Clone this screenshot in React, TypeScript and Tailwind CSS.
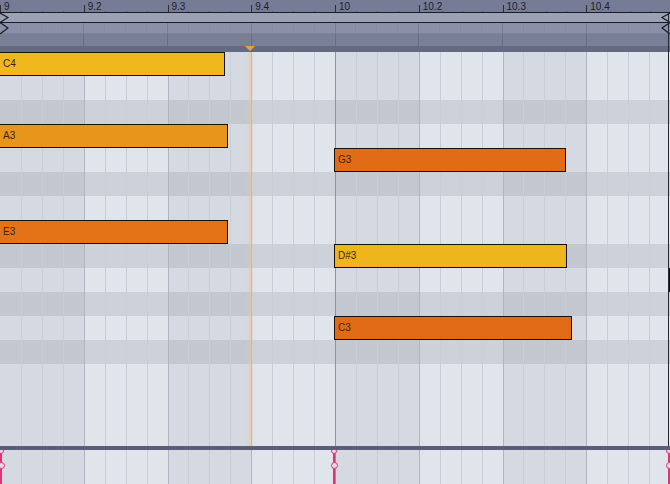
const BEATS = ['9', '9.2', '9.3', '9.4', '10', '10.2', '10.3', '10.4'];

// piano-roll lanes, top to bottom: l = white key, d = black key
const ROWS = ['l', 'l', 'd', 'l', 'l', 'd', 'l', 'l', 'd', 'l', 'd', 'l', 'd', 'l', 'l', 'l', 'l'];

const NOTES = [
  { label: 'C4', pos: 'left-[-1px] top-[0px] w-[226px]', color: 'bg-[#f0b81d]' },
  { label: 'A3', pos: 'left-[-1px] top-[72px] w-[229px]', color: 'bg-[#e8961b]' },
  { label: 'G3', pos: 'left-[334px] top-[96px] w-[232px]', color: 'bg-[#e26c15]' },
  { label: 'E3', pos: 'left-[-1px] top-[168px] w-[229px]', color: 'bg-[#e37316]' },
  { label: 'D#3', pos: 'left-[334px] top-[192px] w-[233px]', color: 'bg-[#efb51c]' },
  { label: 'C3', pos: 'left-[334px] top-[264px] w-[238px]', color: 'bg-[#e16b15]' },
  { label: '', pos: 'left-[669px] top-[216px] w-[10px]', color: 'bg-[#efb51c]' },
];

const SUBS = Array.from({ length: 32 }, (_, i) => i);

function lineClass(i: number) {
  if (i === 0) return 'border-l border-transparent';
  if (i % 16 === 0) return 'border-l border-[#8f939e]';
  if (i % 4 === 0) return 'border-l border-[#b1b5bf]';
  return 'border-l border-[#c9cdd5]';
}

function bandClass(i: number) {
  return Math.floor(i / 4) % 2 === 0 ? 'bg-[rgba(60,70,95,0.065)]' : '';
}

function Columns() {
  return (
    <div className="absolute inset-0 flex pointer-events-none">
      {SUBS.map((i) => (
        <div key={i} className={`flex-1 ${lineClass(i)} ${bandClass(i)}`} />
      ))}
    </div>
  );
}

function Ruler() {
  return (
    <div className="h-[12px] flex bg-[#767b96]">
      {BEATS.map((b) => (
        <div key={b} className="flex-1 flex">
          {[0, 1, 2, 3].map((s) => (
            <div key={s} className="flex-1 flex items-end">
              {s === 0 ? (
                <div className="flex items-start h-full">
                  <div className="w-px h-[7px] mt-[5px] bg-[#2b2d3c]" />
                  <span className="ml-[3px] mt-[2px] text-[10px] leading-none text-[#1d1f2c] whitespace-nowrap">
                    {b}
                  </span>
                </div>
              ) : (
                <div className="w-px h-px bg-[#5a5d72]" />
              )}
            </div>
          ))}
        </div>
      ))}
    </div>
  );
}

function HeaderStrips() {
  return (
    <div className="relative">
      <div className="h-[11px] border-y border-[#1b1c26] bg-[#9ca1b6]" />
      <div className="relative h-[11px] bg-[#8b90a8] border-b border-[#7d8299]">
        <div className="absolute inset-0 flex">
          {SUBS.map((i) => (
            <div
              key={i}
              className={`flex-1 ${i === 0 ? '' : i % 4 === 0 ? 'border-l border-[#787d95]' : 'border-l border-[#858aa2]'}`}
            />
          ))}
        </div>
      </div>
      <div className="relative h-[12px] bg-[#7a7f98]">
        <div className="absolute inset-0 flex">
          {BEATS.map((b, i) => (
            <div key={b} className={`flex-1 ${i === 0 ? '' : 'border-l border-[#686d86]'}`} />
          ))}
        </div>
      </div>
      <div className="relative h-[6px] bg-[#656a83]">
        <div className="absolute left-[245px] top-0 w-0 h-0 border-x-[5px] border-x-transparent border-t-[5px] border-t-[#e3a445]" />
      </div>

      {/* loop brace markers */}
      <svg className="absolute left-0 top-0" width="10" height="23" viewBox="0 0 10 23">
        <polyline points="0,1 8,5.5 0,10.5 8,16 0,22" fill="none" stroke="#15161d" strokeWidth="1.1" />
      </svg>
      <svg className="absolute right-0 top-0" width="10" height="23" viewBox="0 0 10 23">
        <polyline points="10,1 2,5.5 10,10.5 2,16 10,22" fill="none" stroke="#15161d" strokeWidth="1.1" />
      </svg>
    </div>
  );
}

function NoteGrid() {
  return (
    <div className="relative h-[394px] overflow-hidden">
      <div className="flex flex-col">
        {ROWS.map((r, i) => (
          <div key={i} className={`h-[24px] shrink-0 ${r === 'd' ? 'bg-[#cdd1d9]' : 'bg-[#e0e4eb]'}`} />
        ))}
      </div>
      <Columns />

      {/* insert marker glow */}
      <div className="absolute left-[246px] top-0 bottom-0 w-[9px] bg-[linear-gradient(to_right,rgba(240,205,150,0),rgba(238,200,140,0.42),rgba(240,205,150,0))]" />

      {NOTES.map((n) => (
        <div
          key={n.label + n.pos}
          className={`absolute h-[24px] flex items-center border border-[#15120c] ${n.pos} ${n.color}`}
        >
          <span className="pl-[3px] text-[10px] leading-none text-[#3a2610]">{n.label}</span>
        </div>
      ))}
    </div>
  );
}

function Stem({ pos }: { pos: string }) {
  return (
    <div className={`absolute top-0 bottom-0 w-[2px] bg-[#e2317b] ${pos}`}>
      <div className="absolute left-[-2px] top-[-2px] w-[6px] h-[6px] rounded-full border-[1.5px] border-[#e2317b] bg-[#f3d5e2]" />
      <div className="absolute left-[-2.5px] top-[12px] w-[7px] h-[7px] rounded-full border-[1.5px] border-[#e2317b] bg-[#f3d5e2]" />
    </div>
  );
}

function VelocityLane() {
  return (
    <div className="relative h-[34px] bg-[#e0e4eb] overflow-hidden">
      <Columns />
      <Stem pos="left-[0px]" />
      <Stem pos="left-[333px]" />
      <Stem pos="left-[668px]" />
    </div>
  );
}

export default function App() {
  return (
    <div
      className="relative w-[670px] h-[484px] overflow-hidden bg-[#e0e4eb] select-none"
      style={{ fontFamily: '"Liberation Sans", Arial, sans-serif' }}
    >
      <Ruler />
      <HeaderStrips />
      <NoteGrid />
      <div className="h-[4px] bg-[#5a5e78]" />
      <VelocityLane />

      {/* clip end line */}
      <div className="absolute left-[667.5px] top-[12px] h-[434px] w-[1.5px] bg-[#262835]" />
    </div>
  );
}
